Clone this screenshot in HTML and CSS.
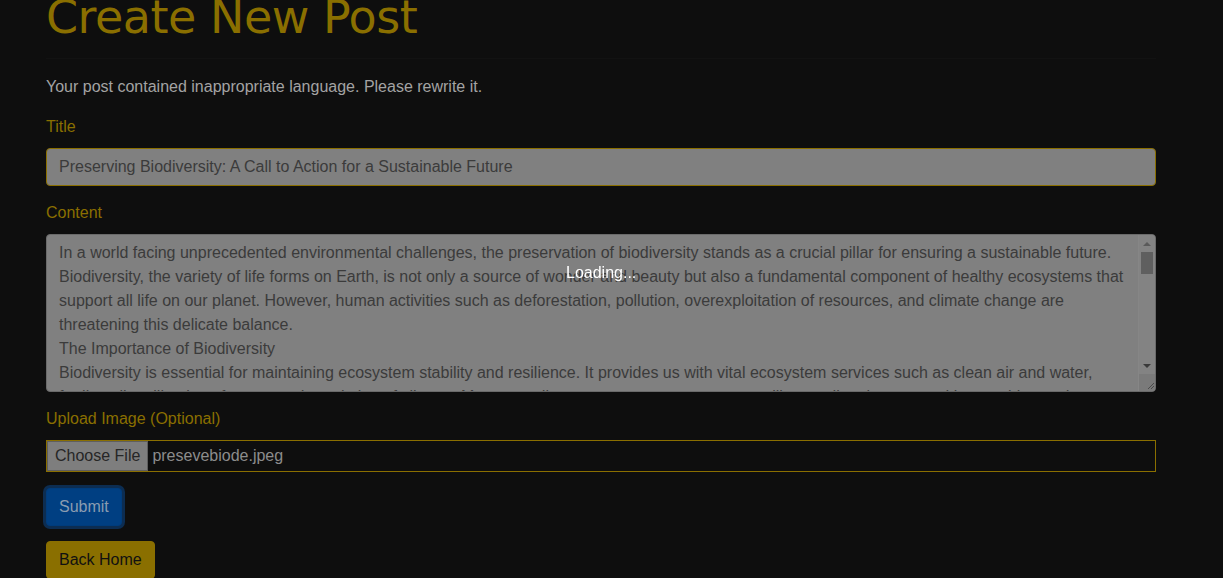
FILE: index.html
```html
<!DOCTYPE html>
<html lang="en">
<head>
<meta charset="utf-8">
<title>Create New Post</title>
<link rel="stylesheet" href="styles.css">
</head>
<body>
<div class="container">
  <h1 class="page-title">Create New Post</h1>
  <hr class="rule">
  <p class="notice">Your post contained inappropriate language. Please rewrite it.</p>
  <form class="post-form">
    <div class="form-group">
      <label class="field-label" for="title">Title</label>
      <input class="form-control title-input" id="title" type="text" value="Preserving Biodiversity: A Call to Action for a Sustainable Future">
    </div>
    <div class="form-group">
      <label class="field-label" for="content">Content</label>
      <div class="textarea-box">
        <textarea class="content-input" id="content">In a world facing unprecedented environmental challenges, the preservation of biodiversity stands as a crucial pillar for ensuring a sustainable future.
Biodiversity, the variety of life forms on Earth, is not only a source of wonder and beauty but also a fundamental component of healthy ecosystems that support all life on our planet. However, human activities such as deforestation, pollution, overexploitation of resources, and climate change are threatening this delicate balance.
The Importance of Biodiversity
Biodiversity is essential for maintaining ecosystem stability and resilience. It provides us with vital ecosystem services such as clean air and water, fertile soil, pollination of crops, and regulation of climate. Moreover, diverse ecosystems are more resilient to disturbances and better able to adapt to change.</textarea>
        <div class="scrollbar">
          <div class="sb-button"><span class="arrow-up"></span></div>
          <div class="sb-thumb"></div>
          <div class="sb-space"></div>
          <div class="sb-button"><span class="arrow-down"></span></div>
          <div class="sb-corner">
            <svg width="17" height="17" viewBox="0 0 17 17"><path d="M15 9 L9 15 M15 12 L12 15" stroke="#4a4a4a" stroke-width="1" fill="none"/></svg>
          </div>
        </div>
      </div>
    </div>
    <div class="form-group">
      <label class="field-label">Upload Image (Optional)</label>
      <div class="file-input">
        <span class="file-button">Choose File</span>
        <span class="file-name">presevebiode.jpeg</span>
      </div>
    </div>
    <div class="form-group">
      <button type="button" class="btn btn-submit">Submit</button>
    </div>
    <a class="btn btn-home" href="#">Back Home</a>
  </form>
</div>
<div class="overlay"><span class="loading">Loading...</span></div>
</body>
</html>
```
FILE: styles.css
```css
html, body {
  margin: 0;
  padding: 0;
  height: 100%;
  overflow: hidden;
}
body {
  background: #0e0e0e;
  color: #a3a3a3;
  font-family: "Liberation Sans", Arial, sans-serif;
  font-size: 16px;
  line-height: 24px;
}
.container {
  width: 1110px;
  padding-left: 46px;
}
.page-title {
  font-family: "Comic Sans MS", "DejaVu Sans", sans-serif;
  font-weight: normal;
  font-size: 46px;
  line-height: 56px;
  color: #8a6f00;
  margin: -11px 0 0 0;
  letter-spacing: -0.5px;
}
.rule {
  border: 0;
  border-top: 1px solid #121212;
  margin: 13px 0 16px;
}
.notice {
  margin: 0 0 16px;
  color: #a3a3a3;
}
.form-group {
  margin-bottom: 15px;
}
.field-label {
  display: block;
  color: #8a6f00;
  margin-bottom: 9px;
}
.form-control {
  box-sizing: border-box;
  display: block;
  width: 100%;
  font-family: "Liberation Sans", Arial, sans-serif;
  font-size: 16px;
  line-height: 24px;
  color: #3b3b3b;
  background: #808080;
  border-radius: 4px;
  padding: 6px 12px;
  margin: 0;
}
.title-input {
  height: 38px;
  border: 1px solid #8a6f00;
  outline: none;
}
.textarea-box {
  box-sizing: border-box;
  display: flex;
  height: 158px;
  border: 1px solid #6a6a6a;
  border-radius: 4px;
  background: #808080;
  overflow: hidden;
}
.content-input {
  flex: 1;
  min-width: 0;
  box-sizing: border-box;
  height: 100%;
  border: 0;
  margin: 0;
  padding: 6px 12px;
  background: transparent;
  font-family: "Liberation Sans", Arial, sans-serif;
  font-size: 16px;
  line-height: 24px;
  color: #3b3b3b;
  resize: none;
  overflow: hidden;
  outline: none;
}
.scrollbar {
  width: 16px;
  display: flex;
  flex-direction: column;
  background: #838383;
  border-left: 1px solid #868686;
}
.sb-button {
  height: 17px;
  display: flex;
  align-items: center;
  justify-content: center;
}
.arrow-up {
  width: 0;
  height: 0;
  border-left: 4px solid transparent;
  border-right: 4px solid transparent;
  border-bottom: 4px solid #5a5a5a;
}
.arrow-down {
  width: 0;
  height: 0;
  border-left: 4px solid transparent;
  border-right: 4px solid transparent;
  border-top: 4px solid #3a3a3a;
}
.sb-thumb {
  height: 22px;
  margin: 0 2px;
  background: #5f5f5f;
}
.sb-space {
  flex: 1;
}
.sb-corner {
  height: 17px;
  background: #7a7a7a;
}
.sb-corner svg {
  display: block;
}
.file-input {
  box-sizing: border-box;
  display: flex;
  align-items: center;
  height: 32px;
  border: 1px solid #8a6f00;
  padding: 0;
}
.file-button {
  box-sizing: border-box;
  height: 30px;
  display: flex;
  align-items: center;
  padding: 0 7px;
  background: #7e7e7e;
  border: 1px solid #5e5e5e;
  color: #262626;
}
.file-name {
  margin-left: 4px;
  color: #8c8c8c;
}
.btn {
  box-sizing: border-box;
  display: inline-block;
  height: 38px;
  padding: 6px 12px;
  font-family: "Liberation Sans", Arial, sans-serif;
  font-size: 16px;
  line-height: 24px;
  border-radius: 4px;
  text-decoration: none;
}
.btn-submit {
  margin-top: 1px;
  background: #003f82;
  color: #8a9cb1;
  border: 1px solid #003c7c;
  box-shadow: 0 0 0 3px #0c2d52;
}
.btn-home {
  background: #8a6f00;
  color: #111111;
  border: 1px solid #8a6f00;
}
.overlay {
  position: fixed;
  inset: 0;
}
.loading {
  position: absolute;
  left: 566px;
  top: 261px;
  color: #ffffff;
  font-size: 16px;
  line-height: 24px;
}
```
